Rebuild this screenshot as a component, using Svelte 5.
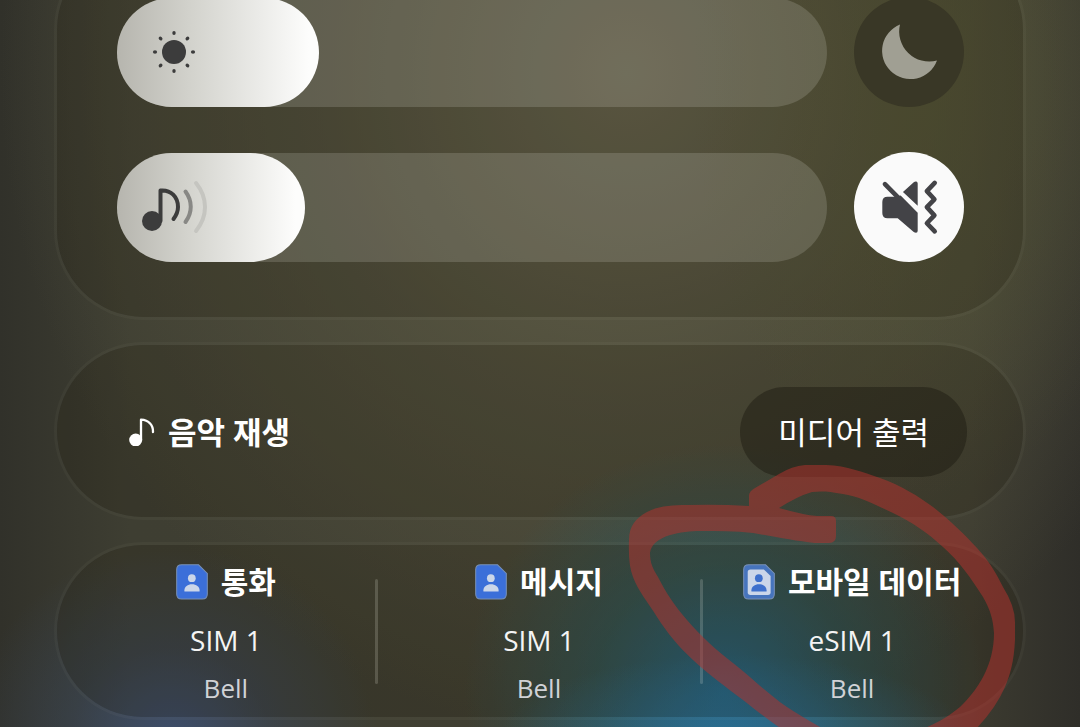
<script>
	let brightness = $state(28.5);
	let volume = $state(26.5);
	let nightMode = $state(false);
	let muted = $state(true);

	const sims = [
		{ label: "통화", name: "SIM 1", carrier: "Bell", esim: false },
		{ label: "메시지", name: "SIM 1", carrier: "Bell", esim: false },
		{ label: "모바일 데이터", name: "eSIM 1", carrier: "Bell", esim: true },
	];

	const rays = [0, 45, 90, 135, 180, 225, 270, 315];
</script>

<main class="page">
	<div class="stack">
		<section class="panel sliders">
			<div class="row">
				<div class="slider">
					<input
						type="range"
						min="0"
						max="100"
						step="0.5"
						aria-label="밝기"
						bind:value={brightness} />
					<div class="fill" style="width: {brightness}%">
						<svg class="sun" viewBox="0 0 44 44">
							<circle cx="22" cy="22" r="12" />
							{#each rays as angle}
								<ellipse
									cx="22"
									cy="3"
									rx="1.7"
									ry="2.1"
									transform="rotate({angle} 22 22)" />
							{/each}
						</svg>
					</div>
				</div>
				<button
					class="round"
					class:on={nightMode}
					aria-label="다크 모드"
					onclick={() => (nightMode = !nightMode)}>
					<svg class="glyph" viewBox="0 0 57 57">
						<path
							d="M19 0.5A28.3 28.3 0 1 0 56 36.5A30 30 0 0 1 19 0.5z"
							fill="currentColor" />
					</svg>
				</button>
			</div>
			<div class="row">
				<div class="slider">
					<input
						type="range"
						min="0"
						max="100"
						step="0.5"
						aria-label="음량"
						bind:value={volume} />
					<div class="fill" style="width: {volume}%">
						<svg class="sound" viewBox="0 0 68 54">
							<circle cx="12" cy="41" r="10" />
							<g
								fill="none"
								stroke-width="4"
								stroke-linecap="round"
								stroke-linejoin="round">
								<path d="M20.5 41V10.5C31 9.5 38 17 38 27q0 6-4.5 12" stroke="#3c3c3c" />
								<path d="M45.5 11.5c7 9.5 7 21 0 30.5" stroke="#888885" />
								<path d="M56 3c12 15 12 33 0 48" stroke="#c5c5c0" />
							</g>
						</svg>
					</div>
				</div>
				<button
					class="round"
					class:on={muted}
					aria-label="진동"
					onclick={() => (muted = !muted)}>
					<svg class="glyph" viewBox="0 0 174 171">
						<path
							d="M12 16L58 62"
							stroke="currentColor"
							stroke-width="14"
							stroke-linecap="round" />
						<path
							d="M20 54H46L60 50 112 103V158Q112 164 107 164 103 164 99 161L51 120H20Q4 120 4 104V70Q4 54 20 54z"
							fill="currentColor" />
						<path
							d="M67 40L100 10Q104 7 108 8 112 9 112 14V82z"
							fill="currentColor" />
						<path
							d="M164 12L140 37 163 62 140 86 163 111 140 135 164 160"
							fill="none"
							stroke="currentColor"
							stroke-width="14"
							stroke-linecap="round"
							stroke-linejoin="round" />
					</svg>
				</button>
			</div>
		</section>

		<section class="panel media">
			<h2>
				<svg class="note" viewBox="0 0 78 86">
					<circle cx="20" cy="66" r="19.5" fill="#fff" />
					<path
						d="M36 66V5C60 6 73 22 72 42"
						fill="none"
						stroke="#fff"
						stroke-width="7"
						stroke-linecap="round"
						stroke-linejoin="round" />
				</svg>
				음악 재생
			</h2>
			<button class="output">미디어 출력</button>
		</section>

		<section class="panel sims">
			{#each sims as sim, i}
				{#if i > 0}
					<span class="divider"></span>
				{/if}
				<button class="sim">
					<span class="label">
						<svg class="card" viewBox="-1 -1 95 107">
							<path
								d="M16 1.5H66L92 27V88Q92 103 77 103H16Q1 103 1 88V16Q1 1.5 16 1.5z"
								fill={sim.esim ? "#4674bd" : "#3b6fd9"}
								stroke="#7890b4"
								stroke-width="3" />
							{#if sim.esim}
								<path
									d="M21 15H61L81 35V83Q81 91 73 91H21Q13 91 13 83V23Q13 15 21 15z"
									fill="#cbd6e9" />
							{/if}
							<g fill={sim.esim ? "#3e70cc" : "#cbd6e9"}>
								<circle cx="46" cy="41" r="11.5" />
								<path d="M24 81V77C24 66 34 59 46.5 59S69 66 69 77V81z" />
							</g>
						</svg>
						{sim.label}
					</span>
					<span class="name">{sim.name}</span>
					<span class="carrier">{sim.carrier}</span>
				</button>
			{/each}
		</section>
	</div>

	<!-- marker stroke over the data SIM -->
	<svg class="marker" viewBox="0 0 1080 727">
		<path
			d="M749 506V496Q749 491 755 488L779 474Q792 466 805 465H826C848 466 862 472 880 478C902 486 918 496 933 507C950 520 966 536 977 548C990 562 997 575 1003 587Q1015 606 1015 622V640C1014 662 1010 675 1005 687Q995 710 973 732H915C934 725 948 717 960 707C978 690 994 665 994 633C993 620 991 611 983 597C971 578 959 561 943 547C928 533 912 522 893 513C874 504 858 496 843 494C828 491 820 491 812 492Q798 496 779 508Q804 515 817 516H831Q836 516 836 521V536Q836 543 829 543H815C795 541 776 537 753 533C735 531 718 531 700 531C683 531 652 535 650 553C650 563 653 569 658 577C666 593 675 606 687 620C701 636 716 650 733 663C752 678 768 694 787 707Q802 717 829 732H786C771 722 758 712 743 700C726 687 709 675 693 660C679 647 668 634 657 617C648 602 638 591 633 577Q628 565 629 540C629 526 636 518 647 512C658 506 672 505 687 505Q718 504 749 506z" />
	</svg>
</main>

<style>
	:global(body) {
		margin: 0;
		background: #33332b;
	}
	.page {
		position: relative;
		min-height: 100vh;
		overflow: hidden;
		color: #fff;
		font-family: "Open Sans", "Noto Sans CJK KR", sans-serif;
		background:
			radial-gradient(ellipse 22% 12% at 68% 102%, rgba(42, 122, 172, 0.6), transparent),
			radial-gradient(ellipse 24% 34% at 67% 95%, rgba(34, 104, 138, 0.85), rgba(36, 94, 104, 0.5) 50%, transparent),
			radial-gradient(ellipse 19% 27% at 16% 102%, rgba(60, 84, 132, 0.7), rgba(56, 74, 104, 0.4) 50%, transparent),
			radial-gradient(ellipse 22% 56% at 86% 12%, rgba(86, 88, 50, 0.5), transparent),
			radial-gradient(ellipse 58% 92% at 58% 10%, #66634d, rgba(92, 90, 68, 0.65) 45%, transparent),
			linear-gradient(90deg, #31312a, #3e3e32 12%, #403f32 50%, #3c3b30 90%, #2f2e29);
	}
	/* scrolled so that the top edge of the first panel is out of view */
	.stack {
		display: flex;
		flex-direction: column;
		gap: 22px;
		margin: -60px 5% 0;
	}
	.panel {
		box-sizing: border-box;
		border: 3px solid rgba(255, 255, 230, 0.03);
		border-radius: 90px;
		background: rgba(30, 22, 6, 0.18);
		background-clip: padding-box;
	}
	button {
		border: 0;
		padding: 0;
		background: none;
		color: inherit;
		font: inherit;
		cursor: pointer;
	}
	svg {
		display: block;
		flex: none;
	}

	.sliders {
		display: flex;
		flex-direction: column;
		gap: 45px;
		padding: 54px 59px 55px 60px;
	}
	.row {
		display: flex;
		align-items: center;
		gap: 27px;
	}
	.slider {
		position: relative;
		flex: 1;
		height: 109px;
	}
	.slider input {
		appearance: none;
		display: block;
		width: 100%;
		height: 100%;
		margin: 0;
		border-radius: 55px;
		background: rgba(255, 255, 245, 0.15);
		cursor: pointer;
	}
	.slider input::-webkit-slider-thumb {
		appearance: none;
		width: 1px;
		height: 100px;
	}
	.fill {
		position: absolute;
		top: 0;
		left: 0;
		box-sizing: border-box;
		display: flex;
		align-items: center;
		height: 100%;
		min-width: 109px;
		border-radius: 55px;
		background: linear-gradient(90deg, #b6b5ae, #d2d2cc 36%, #fdfdfc 95%);
		fill: #3c3c3c;
		pointer-events: none;
	}
	.sun {
		width: 44px;
		margin-left: 35px;
	}
	.sound {
		width: 68px;
		margin-left: 23px;
	}
	.round {
		display: flex;
		align-items: center;
		justify-content: center;
		width: 110px;
		height: 110px;
		border-radius: 50%;
		background: #393726;
		color: #a09f93;
	}
	.round.on {
		background: #fafafa;
		color: #434347;
	}
	.glyph {
		width: 57px;
	}

	.media {
		display: flex;
		align-items: center;
		justify-content: space-between;
		height: 178px;
		padding: 2px 56px 0 72px;
	}
	h2 {
		display: flex;
		align-items: center;
		gap: 13px;
		margin: 0;
		font-size: 31px;
		font-weight: 700;
		line-height: 40px;
	}
	.note {
		width: 26px;
	}
	.output {
		height: 90px;
		padding: 0 38px;
		border-radius: 45px;
		background: rgba(30, 27, 18, 0.5);
		font-size: 31px;
		line-height: 40px;
	}

	.sims {
		display: grid;
		grid-template-columns: 12fr 3px 13fr 3px 12fr;
		align-items: center;
		height: 178px;
		padding: 0 22px 0 20px;
	}
	.divider {
		height: 105px;
		border-radius: 2px;
		background: rgba(255, 255, 245, 0.17);
	}
	.sim {
		display: flex;
		flex-direction: column;
		align-items: center;
		padding: 18px 0 10px;
	}
	.label {
		display: flex;
		align-items: center;
		gap: 13px;
		font-size: 30px;
		font-weight: 700;
		line-height: 36px;
		white-space: nowrap;
	}
	.card {
		width: 32px;
	}
	.name {
		margin-top: 20px;
		font-size: 28px;
		line-height: 40px;
		color: #f4f4f4;
	}
	.carrier {
		margin-top: 10px;
		font-size: 26px;
		line-height: 36px;
		color: #d0d2d6;
	}

	.marker {
		position: absolute;
		top: 0;
		left: 0;
		width: 100%;
		fill: rgba(180, 50, 46, 0.52);
		pointer-events: none;
	}
</style>
